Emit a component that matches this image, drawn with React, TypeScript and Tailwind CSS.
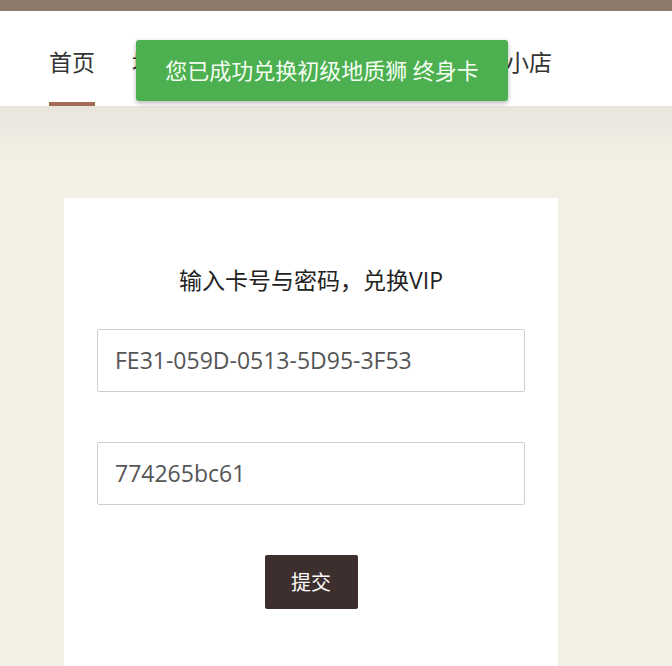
import React from 'react';

const navItems = ['首页', '地质课程', '资料库', '会员', '地质狮小店'];

export default function App() {
  return (
    <div
      className="relative min-h-[666px] w-full overflow-hidden bg-[#f3efe5]"
      style={{ fontFamily: '"Open Sans", "Noto Sans CJK SC", sans-serif' }}
    >
      <div className="h-[11px] bg-[#8c7b6c]" />
      <nav className="flex h-[95px] items-stretch gap-[34px] bg-white pl-[49px]">
        {navItems.map((item, i) => (
          <div
            key={item}
            className={`relative flex items-center pt-[7px] text-[23px] text-[#333] ${i === 1 ? 'ml-[3px]' : ''} ${i === 4 ? '-ml-[4px]' : ''}`}
          >
            {item}
            {i === 0 && <div className="absolute bottom-0 left-0 right-0 h-[4px] bg-[#a46b55]" />}
          </div>
        ))}
      </nav>
      <div className="h-[50px] bg-gradient-to-b from-[#e8e5dd] to-[#f3efe5]" />

      <div className="ml-[64px] mt-[42px] w-[494px] bg-white px-[33px] pb-[60px] pt-[66px]">
        <h2 className="text-center text-[23px] leading-[32px] text-[#222]">输入卡号与密码，兑换VIP</h2>
        <div className="mt-[33px] flex h-[63px] items-center rounded-[2px] border border-[#cfcfcf] px-[17px] text-[23px] text-[#555]">
          FE31-059D-0513-5D95-3F53
        </div>
        <div className="mt-[50px] flex h-[63px] items-center rounded-[2px] border border-[#cfcfcf] px-[17px] text-[23px] text-[#555]">
          774265bc61
        </div>
        <div className="mt-[50px] flex justify-center">
          <button className="h-[54px] w-[93px] rounded-[2px] bg-[#3e2f2f] pt-[2px] text-[20px] text-white">提交</button>
        </div>
      </div>

      <div className="absolute left-[136px] top-[40px] flex h-[61px] w-[372px] items-center justify-center rounded-[3px] bg-[#4caf50] text-[22px] text-[#f4fff2] shadow-[0_2px_5px_rgba(0,0,0,0.3)]">
        您已成功兑换初级地质狮 终身卡
      </div>
    </div>
  );
}
